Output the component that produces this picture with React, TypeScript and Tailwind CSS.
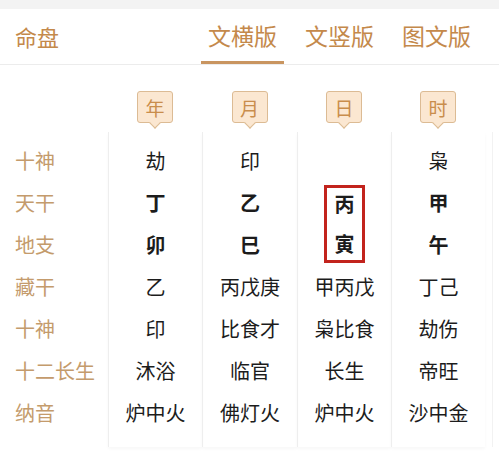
import React from "react";

const FONT = '"Noto Sans CJK SC", "Noto Sans", sans-serif';

type Cell = { t: string; b?: boolean };

const labels = ["十神", "天干", "地支", "藏干", "十神", "十二长生", "纳音"];

const cols: { head: string; cells: Cell[] }[] = [
  {
    head: "年",
    cells: [
      { t: "劫" },
      { t: "丁", b: true },
      { t: "卯", b: true },
      { t: "乙" },
      { t: "印" },
      { t: "沐浴" },
      { t: "炉中火" },
    ],
  },
  {
    head: "月",
    cells: [
      { t: "印" },
      { t: "乙", b: true },
      { t: "巳", b: true },
      { t: "丙戊庚" },
      { t: "比食才" },
      { t: "临官" },
      { t: "佛灯火" },
    ],
  },
  {
    head: "日",
    cells: [
      { t: "" },
      { t: "丙", b: true },
      { t: "寅", b: true },
      { t: "甲丙戊" },
      { t: "枭比食" },
      { t: "长生" },
      { t: "炉中火" },
    ],
  },
  {
    head: "时",
    cells: [
      { t: "枭" },
      { t: "甲", b: true },
      { t: "午", b: true },
      { t: "丁己" },
      { t: "劫伤" },
      { t: "帝旺" },
      { t: "沙中金" },
    ],
  },
];

const widths = ["w-[94px]", "w-[95px]", "w-[94px]", "w-[94px]"];

function Badge({ c }: { c: string }) {
  return (
    <div className="relative flex h-[32px] w-[36px] items-center justify-center rounded-[3px] border border-[#dcbb94] bg-[#fbe7d1] text-[19px] leading-none text-[#c98d4c]">
      {c}
      <div className="absolute bottom-[-5px] left-1/2 h-[8px] w-[8px] -translate-x-1/2 rotate-45 border-b border-r border-[#dcbb94] bg-[#fbe7d1]" />
    </div>
  );
}

function CellText({ c }: { c: Cell }) {
  return (
    <div
      className={`flex h-[42px] items-center justify-center whitespace-nowrap text-[20px] leading-none text-[#1c1c1c] ${
        c.b ? "font-bold" : "font-normal"
      }`}
    >
      {c.t}
    </div>
  );
}

export default function App() {
  return (
    <div
      className="flex h-[458px] w-[499px] flex-col bg-[#f3f3f3] pt-[9px]"
      style={{ fontFamily: FONT }}
    >
      {/* Header */}
      <div className="flex h-[56px] items-stretch border-b border-[#ececec] bg-white">
        <div className="flex w-[201px] shrink-0 items-center whitespace-nowrap pb-[2px] pl-[15px] text-[22px] leading-none text-[#c4894b]">
          命盘
        </div>
        <div className="flex items-stretch gap-[14px]">
          {["文横版", "文竖版", "图文版"].map((t, i) => (
            <div
              key={t}
              className={`flex w-[83px] shrink-0 items-center justify-center whitespace-nowrap pb-[2px] text-[23px] leading-none text-[#c4894b] ${
                i === 0 ? "border-b-[3px] border-[#c99560] pt-[3px]" : ""
              }`}
            >
              {t}
            </div>
          ))}
        </div>
      </div>

      {/* Body */}
      <div className="flex flex-1 flex-col bg-white pb-[11px]">
        {/* badges */}
        <div className="flex h-[67px] pt-[26px]">
          <div className="w-[108px]" />
          {cols.map((c, i) => (
            <div key={c.head} className={`flex justify-center ${widths[i]}`}>
              <Badge c={c.head} />
            </div>
          ))}
        </div>

        <div className="flex flex-1">
          {/* label column */}
          <div className="flex w-[108px] flex-col pt-[8px]">
            {labels.map((l, i) => (
              <div
                key={i}
                className="flex h-[42px] items-center whitespace-nowrap pl-[15px] text-[20px] leading-none text-[#c49b6c]"
              >
                {l}
              </div>
            ))}
          </div>
          {cols.map((c, ci) => (
            <div
              key={c.head}
              className={`flex flex-col border-l border-[#eeeeee] pt-[8px] shadow-[0_2px_3px_rgba(0,0,0,0.03)] ${widths[ci]}`}
            >
              <CellText c={c.cells[0]} />
              {ci === 2 ? (
                <div className="flex h-[84px] items-center justify-center">
                  <div className="flex h-[78px] w-[41px] flex-col items-center justify-between border-[3px] border-[#c2231d] py-[4px] text-[20px] font-bold leading-none text-[#1c1c1c]">
                    <span className="pt-[2px]">{c.cells[1].t}</span>
                    <span className="pb-[2px]">{c.cells[2].t}</span>
                  </div>
                </div>
              ) : (
                <>
                  <CellText c={c.cells[1]} />
                  <CellText c={c.cells[2]} />
                </>
              )}
              {c.cells.slice(3).map((cell, k) => (
                <CellText key={k} c={cell} />
              ))}
            </div>
          ))}
          <div className="w-[8px] border-r border-[#f2f2f2]" />
        </div>
      </div>
    </div>
  );
}
